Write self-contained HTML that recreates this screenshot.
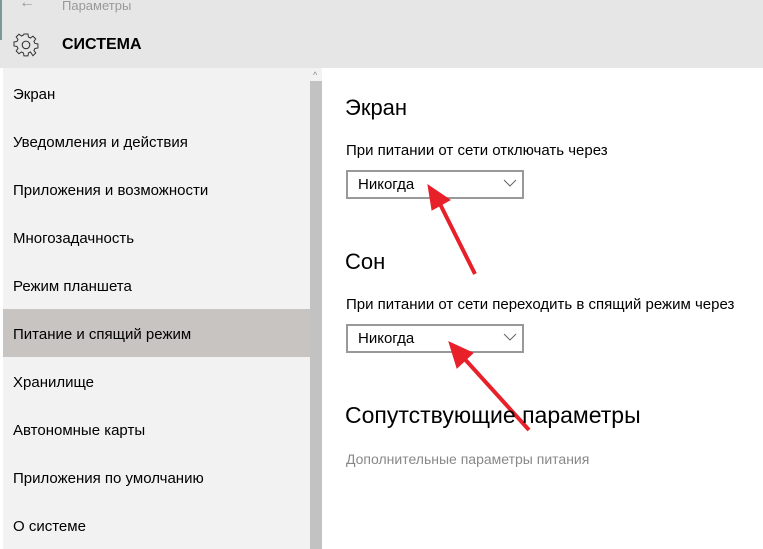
<!DOCTYPE html>
<html><head><meta charset="utf-8"><style>
body{margin:0;width:763px;height:549px;overflow:hidden;background:#fff;font-family:"Liberation Sans",sans-serif;position:relative}
.hdr{position:absolute;left:0;top:0;width:763px;height:68px;background:#e6e6e6}
.side{position:absolute;left:3px;top:68px;width:307px;height:481px;background:#f2f2f2}
.sb{position:absolute;left:310px;top:68px;width:12px;height:481px;background:#f2f2f2}
.thumb{position:absolute;left:310px;top:81px;width:12px;height:468px;background:#c2c2c2}
.it{position:absolute;left:13px;font-size:15px;color:#000}
.sel{position:absolute;left:3px;top:309px;width:307px;height:48px;background:#c7c4c1}
.t{position:absolute;color:#000}
.dd{position:absolute;left:346px;width:178px;height:29px;border:2px solid #999;box-sizing:border-box}
.dd span{position:absolute;left:10px;top:4px;font-size:15px}
</style></head><body>
<div class="hdr"></div>
<div style="position:absolute;left:0;top:0;width:2px;height:40px;background:#7a9a9a"></div>
<div class="t" style="left:19px;top:-6px;font-size:16px;color:#999">←</div>
<div class="t" style="left:62px;top:-2px;font-size:13px;color:#999">Параметры</div>
<svg style="position:absolute;left:13px;top:33px" width="26" height="26" viewBox="0 0 24 24" fill="none" stroke="#333" stroke-width="1"><path d="M10 2h4l.5 3 2 1 2.5-1.8 2.8 2.8L20 9.5l1 2 3 .5v4l-3 .5-1 2 1.8 2.5-2.8 2.8L16.5 20l-2 1-.5 3h-4l-.5-3-2-1L5 21.8 2.2 19 4 16.5l-1-2-3-.5v-4l3-.5 1-2L2.2 5 5 2.2 7.5 4l2-1z" transform="scale(.92) translate(1 -1)"/><circle cx="12" cy="11" r="3.5"/></svg>
<div class="t" style="left:62px;top:36px;font-size:16px;font-weight:bold">СИСТЕМА</div>
<div class="side"></div><div class="sb"></div><div class="thumb"></div>
<div class="t" style="left:313px;top:70px;font-size:9px;color:#888">^</div>
<div class="sel"></div>
<div class="it" style="top:86px">Экран</div>
<div class="it" style="top:134px">Уведомления и действия</div>
<div class="it" style="top:182px">Приложения и возможности</div>
<div class="it" style="top:230px">Многозадачность</div>
<div class="it" style="top:278px">Режим планшета</div>
<div class="it" style="top:326px">Питание и спящий режим</div>
<div class="it" style="top:374px">Хранилище</div>
<div class="it" style="top:422px">Автономные карты</div>
<div class="it" style="top:470px">Приложения по умолчанию</div>
<div class="it" style="top:518px">О системе</div>
<div class="t" style="left:345px;top:95px;font-size:22px">Экран</div>
<div class="t" style="left:346px;top:142px;font-size:15px">При питании от сети отключать через</div>
<div class="dd" style="top:170px"><span>Никогда</span></div>
<div class="t" style="left:345px;top:249px;font-size:22px">Сон</div>
<div class="t" style="left:346px;top:296px;font-size:15px">При питании от сети переходить в спящий режим через</div>
<div class="dd" style="top:324px"><span>Никогда</span></div>
<svg style="position:absolute;left:0;top:0" width="763" height="549"><g fill="none" stroke="#666" stroke-width="1"><path d="M504 180l6 6 6-6M504 334l6 6 6-6"/></g>
<g stroke="#e8202a" stroke-width="4" fill="#e8202a"><line x1="475" y1="274" x2="438" y2="200"/><polygon points="428,185 450,200 432,210" stroke-width="1"/><line x1="529" y1="430" x2="462" y2="356"/><polygon points="449,342 473,353 457,368" stroke-width="1"/></g></svg>
<div class="t" style="left:345px;top:402px;font-size:23px">Сопутствующие параметры</div>
<div class="t" style="left:346px;top:451px;font-size:14px;color:#888">Дополнительные параметры питания</div>
</body></html>
